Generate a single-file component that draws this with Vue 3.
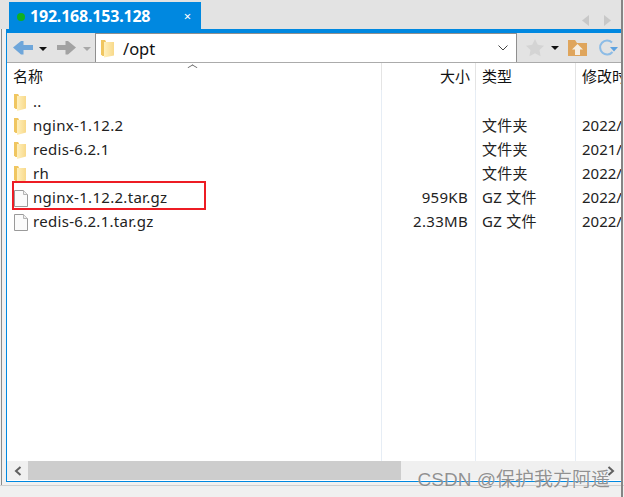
<script setup>
const rows = [
  { name: '..', kind: 'folder' },
  { name: 'nginx-1.12.2', kind: 'folder', type: '文件夹', date: '2022/' },
  { name: 'redis-6.2.1', kind: 'folder', type: '文件夹', date: '2021/' },
  { name: 'rh', kind: 'folder', type: '文件夹', date: '2022/' },
  { name: 'nginx-1.12.2.tar.gz', kind: 'file', size: '959KB', type: 'GZ 文件', date: '2022/', marked: true },
  { name: 'redis-6.2.1.tar.gz', kind: 'file', size: '2.33MB', type: 'GZ 文件', date: '2022/' }
]
</script>

<template>
  <div class="window">
    <div class="tabbar">
      <div class="tab">
        <span class="dot"></span>
        <span class="tab-title">192.168.153.128</span>
        <span class="tab-x">×</span>
      </div>
      <div class="tab-nav">
        <svg width="30" height="14" viewBox="0 0 30 14">
          <path d="M7 1v11L0 6.500z" fill="#c8c8c8" />
          <path d="M22 1v11l7-5.500z" fill="#c8c8c8" />
        </svg>
      </div>
    </div>
    <div class="panel">
      <div class="toolbar">
        <svg class="nav" width="78" height="20" viewBox="0 0 78 20">
          <path d="M0 9.500 8 3h2.500v4H20v5h-9.500v4.500H8z" fill="#6ea6da" />
          <path d="M26 9h8l-4 4z" fill="#111" />
          <path d="M63 9.500 55 3h-2.500v4H44v5h8.500v4.500H55z" fill="#a2a2a2" />
          <path d="M70 9h8l-4 4z" fill="#a8a8a8" />
        </svg>
        <div class="address">
          <svg width="13" height="19" viewBox="0 0 13 19">
            <defs>
              <linearGradient id="ga" x1="0" x2="1" y1="0" y2="0">
                <stop offset="0" stop-color="#fff0bd" />
                <stop offset="1" stop-color="#f8d98a" />
              </linearGradient>
            </defs>
            <path d="M0 1h4l1 1.500V17H1.500L0 15.500z" fill="#f0c660" />
            <path d="M3 3h10v13.500L3 18.500z" fill="url(#ga)" />
          </svg>
          <span class="path">/opt</span>
          <svg class="chev" width="10" height="6" viewBox="0 0 10 6">
            <path d="M.5.500 5 5 9.500.500" fill="none" stroke="#444" />
          </svg>
        </div>
        <div class="tools">
          <svg width="20" height="19" viewBox="0 0 20 19">
            <path d="M10 1l2.800 5.800 6.200.9-4.500 4.300 1.100 6.200L10 15.300l-5.600 2.900L5.500 12 1 7.700l6.200-.9z" fill="#d4d4d4" />
          </svg>
          <svg class="drop" width="8" height="4" viewBox="0 0 8 4"><path d="M0 0h8L4 4z" fill="#111" /></svg>
          <svg class="up" width="19" height="17" viewBox="0 0 19 17">
            <path d="M0 1h7l2 3h10v13H0z" fill="#dfa55c" />
            <path d="M9.500 5 15 10.500h-3V16H7v-5.500H4z" fill="#f6eee2" />
          </svg>
          <svg width="20" height="18" viewBox="0 0 20 18">
            <path d="M14 3.500A7 7 0 1 0 14.500 13" fill="none" stroke="#8dbce6" stroke-width="2" />
            <path d="M12 8h8l-4 4.500z" fill="#5da2e0" />
          </svg>
        </div>
      </div>
      <div class="list">
        <div class="head">
          <div class="c-name">名称<span class="sort"></span></div>
          <div class="c-size">大小</div>
          <div class="c-type">类型</div>
          <div class="c-date">修改时</div>
        </div>
        <div v-for="r in rows" :key="r.name" class="row">
          <div class="c-name name-cell" :class="[r.kind, { marked: r.marked }]">
            <svg v-if="r.kind === 'folder'" width="12" height="17" viewBox="0 0 12 17">
              <path d="M0 0h4l1 1.500V15H1.500L0 13.500z" fill="#f0c660" />
              <path d="M3 2h9v12.500L3 17z" fill="url(#ga)" />
            </svg>
            <svg v-else width="14" height="17" viewBox="0 0 14 17">
              <path d="M.5.500h9l4 4v12H.500z" fill="#fbfbfb" stroke="#9a9a9a" />
              <path d="M9.500.500v4h4" fill="#eee" stroke="#b5b5b5" />
            </svg>
            <span class="name-text">{{ r.name }}</span>
          </div>
          <div class="c-size">{{ r.size }}</div>
          <div class="c-type">{{ r.type }}</div>
          <div class="c-date">{{ r.date }}</div>
        </div>
        <div class="fill">
          <div class="c-name"></div><div class="c-size"></div><div class="c-type"></div><div class="c-date"></div>
        </div>
        <div class="scroll">
          <div class="sb-btn"><svg width="8" height="10" viewBox="0 0 8 10"><path d="M6.500 1 2 5l4.500 4" fill="none" stroke="#606060" stroke-width="2" /></svg></div>
          <div class="sb-thumb"></div>
          <div class="sb-track"></div>
          <div class="sb-btn right"><svg width="8" height="10" viewBox="0 0 8 10"><path d="M1.500 1 6 5 1.500 9" fill="none" stroke="#606060" stroke-width="2" /></svg></div>
        </div>
      </div>
    </div>
    <div class="status"></div>
    <div class="watermark">CSDN @保护我方阿遥</div>
  </div>
</template>

<style>
html, body { margin: 0; background: #fff; }
</style>

<style scoped>
.window {
  position: relative;
  width: 624px;
  height: 497px;
  overflow: hidden;
  box-sizing: border-box;
  display: flex;
  flex-direction: column;
  background: #f0f0f0;
  font-family: "Noto Sans CJK SC", "Noto Sans", sans-serif;
  color: #111;
}
.window::before {
  content: "";
  position: absolute;
  left: 1px;
  top: 29px;
  height: 456px;
  width: 1px;
  background: #8a8a8a;
}
.window::after {
  content: "";
  position: absolute;
  right: 1px;
  top: 0;
  bottom: 0;
  width: 2px;
  background: #858585;
}
.tabbar {
  height: 29px;
  flex: none;
  display: flex;
  justify-content: space-between;
  background: #e3e3e3;
  margin-right: 3px;
  padding-left: 9px;
}
.tab {
  margin-top: 2px;
  width: 192px;
  background: #0088e0;
  color: #fff;
  display: flex;
  align-items: center;
  font: bold 16px "Noto Sans", sans-serif;
  letter-spacing: -.2px;
}
.dot {
  width: 8px;
  height: 8px;
  border-radius: 50%;
  background: #10b020;
  margin: 3px 5px 0 8px;
}
.tab-title { flex: 1; }
.tab-x { font-weight: normal; font-size: 13px; margin-right: 10px; }
.tab-nav { padding: 9px 9px 0 0; }
.panel {
  flex: none;
  height: 453px;
  margin: 0 3px 0 6px;
  box-sizing: border-box;
  border: solid #0088e0;
  border-width: 4px 0 1px 1px;
  display: flex;
  flex-direction: column;
  background: #fff;
}
.toolbar {
  height: 30px;
  flex: none;
  box-sizing: border-box;
  border-bottom: 1px solid #ababab;
  background: #e3e3e3;
  display: flex;
}
.nav { margin: 5px 4px 0 6px; }
.address {
  width: 422px;
  box-sizing: border-box;
  border: solid #8f8f8f;
  border-width: 1px 1px 0 1px;
  background: #fff;
  display: flex;
  align-items: center;
  padding: 0 8px 0 5px;
}
.path { flex: 1; margin-left: 9px; font: 16.500px "Noto Sans", sans-serif; }
.tools { flex: 1; display: flex; align-items: center; padding-left: 8px; }
.drop { margin: 0 9px 0 6px; }
.up { margin-right: 11px; }
.list { flex: 1; display: flex; flex-direction: column; min-height: 0; padding-bottom: 1px; }
.head, .row, .fill { display: flex; flex: none; }
.head { height: 27px; font-size: 15px; line-height: 26px; }
.row { height: 24px; font: 15px/22px "Noto Sans", "Noto Sans CJK SC", sans-serif; letter-spacing: .3px; color: #222; }
.fill { flex: 1; }
.c-name { width: 374px; flex: none; box-sizing: border-box; padding-left: 6px; position: relative; }
.c-size { width: 94px; flex: none; box-sizing: border-box; padding-right: 7px; text-align: right; border-left: 1px solid #e6edf5; }
.c-type { width: 100px; flex: none; box-sizing: border-box; padding-left: 6px; border-left: 1px solid #e6edf5; }
.c-date { flex: 1; box-sizing: border-box; padding-left: 6px; border-left: 1px solid #e6edf5; overflow: hidden; white-space: nowrap; }
.row .c-date { letter-spacing: 0; }
.head .c-size { padding-right: 5px; }
.head .c-size, .head .c-type, .head .c-date { border-left-color: #e4e4e4; }
.sort {
  position: absolute;
  left: 182px;
  top: 1px;
  width: 6px;
  height: 6px;
  border: solid #666;
  border-width: 1px 0 0 1px;
  transform: scaleY(.6) rotate(45deg);
}
.name-cell { display: flex; align-items: center; padding-left: 7px; }
.name-cell svg { flex: none; }
.name-text { margin-bottom: 2px; }
.folder { gap: 7px; }
.file { gap: 5px; }
.marked::after {
  content: "";
  position: absolute;
  left: 5px;
  top: -5px;
  width: 194px;
  height: 29px;
  box-sizing: border-box;
  border: 2px solid #ed1c24;
}
.scroll { height: 19px; flex: none; display: flex; background: #f0f0f0; }
.sb-btn { width: 21px; flex: none; display: flex; align-items: center; justify-content: center; }
.sb-thumb { width: 373px; flex: none; background: #cdcdcd; }
.sb-track { flex: 1; }
.status { flex: 1; border-top: 1px solid #cfcfcf; margin-top: 3px; }
.watermark {
  position: absolute;
  right: 14px;
  top: 464px;
  font: 19px "Liberation Sans", "Noto Sans CJK SC", sans-serif;
  color: rgba(110, 110, 110, .75);
  text-shadow: 0 0 1px rgba(255, 255, 255, .8);
}
</style>
